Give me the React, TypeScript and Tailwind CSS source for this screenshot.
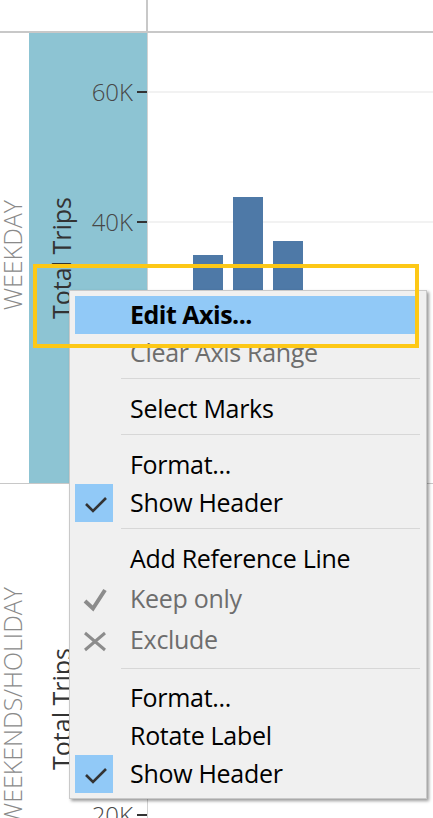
import clsx from "clsx";

type MenuRow =
  | { kind: "item"; label: string; h: string; bold?: boolean; muted?: boolean; active?: boolean; icon?: "check" | "keep" | "x" }
  | { kind: "sep"; pad: string };

const menu: MenuRow[] = [
  { kind: "item", label: "Edit Axis...", h: "h-[38px]", bold: true, active: true },
  { kind: "item", label: "Clear Axis Range", h: "h-[38px]", muted: true },
  { kind: "sep", pad: "pt-[6px]" },
  { kind: "item", label: "Select Marks", h: "h-[38px]" },
  { kind: "sep", pad: "pt-[6px]" },
  { kind: "item", label: "Format...", h: "h-[38px]" },
  { kind: "item", label: "Show Header", h: "h-[38px]", icon: "check" },
  { kind: "sep", pad: "pt-[6px]" },
  { kind: "item", label: "Add Reference Line", h: "h-[39px]" },
  { kind: "item", label: "Keep only", h: "h-[41px]", muted: true, icon: "keep" },
  { kind: "item", label: "Exclude", h: "h-[41px]", muted: true, icon: "x" },
  { kind: "sep", pad: "pt-[7px]" },
  { kind: "item", label: "Format...", h: "h-[38px]" },
  { kind: "item", label: "Rotate Label", h: "h-[38px]" },
  { kind: "item", label: "Show Header", h: "h-[38px]", icon: "check" },
];

function MenuIcon({ icon }: { icon?: "check" | "keep" | "x" }) {
  if (icon === "check") {
    return (
      <div className="flex h-[38px] w-[38px] items-center justify-center bg-[#91c9f7]">
        <svg width="38" height="38" viewBox="0 0 38 38">
          <polyline points="11,20 18,27 31,14" fill="none" stroke="#333" strokeWidth="2.6" />
        </svg>
      </div>
    );
  }
  if (icon === "keep") {
    return (
      <svg width="38" height="41" viewBox="0 0 38 41">
        <polyline points="10,22 18,29.5 30,11" fill="none" stroke="#8c8c8c" strokeWidth="4" />
      </svg>
    );
  }
  if (icon === "x") {
    return (
      <svg width="38" height="41" viewBox="0 0 38 41">
        <path d="M10 13 L30 30 M30 13 L10 30" fill="none" stroke="#8c8c8c" strokeWidth="3" />
      </svg>
    );
  }
  return <div className="h-[38px] w-[38px]" />;
}

function Tick({ top, label }: { top: string; label: string }) {
  return (
    <div className={clsx("absolute right-0 flex -translate-y-1/2 items-center", top)}>
      <span className="text-[24px] font-light leading-none text-[#474747]">{label}</span>
      <span className="ml-[4px] h-[2px] w-[10px] bg-[#333]" />
    </div>
  );
}

function Pane({ row, highlighted }: { row: string; highlighted?: boolean }) {
  return (
    <div className="flex h-[451px] border-b border-[#c8c8c8]">
      <div className="flex w-[29px] items-center justify-center">
        <span className="mb-[6px] mr-[4px] rotate-180 text-[25px] font-light leading-[25px] whitespace-nowrap text-[#8a8a8a] [writing-mode:vertical-rl]">
          {row}
        </span>
      </div>
      <div
        className={clsx(
          "relative flex w-[119px] items-center border-r border-[#d2d2d2]",
          highlighted ? "bg-[#8dc4d3]" : "bg-white"
        )}
      >
        <span className="ml-[20px] rotate-180 text-[25px] leading-[25px] whitespace-nowrap text-[#333] [writing-mode:vertical-rl]">
          Total Trips
        </span>
        {highlighted ? (
          <>
            <Tick top="top-[59px]" label="60K" />
            <Tick top="top-[189px]" label="40K" />
          </>
        ) : (
          <Tick top="top-[331px]" label="20K" />
        )}
      </div>
      <div className="relative flex-1">
        {highlighted && (
          <>
            <div className="absolute left-0 right-0 top-[58px] h-[2px] bg-[#f2f2f2]" />
            <div className="absolute left-0 right-0 top-[188px] h-[2px] bg-[#f2f2f2]" />
            <div className="relative flex h-full items-end gap-[10px] pb-[2px] pl-[45px]">
              <div className="h-[226px] w-[30px] bg-[#4e79a7]" />
              <div className="h-[284px] w-[30px] bg-[#4e79a7]" />
              <div className="h-[240px] w-[30px] bg-[#4e79a7]" />
            </div>
          </>
        )}
      </div>
    </div>
  );
}

export default function App() {
  return (
    <div className="relative h-[818px] w-[433px] overflow-hidden bg-white font-['Open_Sans','Noto_Sans',sans-serif]">
      <div className="flex h-[33px] border-b-2 border-[#c8c8c8]">
        <div className="w-[148px] border-r-2 border-[#c8c8c8]" />
      </div>
      <Pane row="WEEKDAY" highlighted />
      <Pane row="WEEKENDS/HOLIDAY" />

      {/* context menu */}
      <div className="absolute left-[69px] top-[290px] w-[358px] border border-[#c9c9c9] bg-[#f0f0f0] py-[5px] shadow-[2px_2px_3px_rgba(0,0,0,0.4)]">
        {menu.map((m, i) =>
          m.kind === "sep" ? (
            <div key={i} className={clsx("h-[18px]", m.pad)}>
              <div className="ml-[51px] mr-[6px] h-px bg-[#d7d7d7]" />
            </div>
          ) : (
            <div
              key={i}
              className={clsx("ml-[5px] mr-[11px] flex items-center", m.h, m.active && "bg-[#91c9f7]")}
            >
              <MenuIcon icon={m.icon} />
              <span
                className={clsx(
                  "ml-[17px] pb-[2px] text-[25px] leading-none whitespace-nowrap",
                  m.bold ? "tracking-[-0.5px] font-bold" : "tracking-[-0.3px]",
                  m.muted ? "text-[#6d6d6d]" : "text-black"
                )}
              >
                {m.label}
              </span>
            </div>
          )
        )}
      </div>

      {/* callout */}
      <div className="absolute left-[33px] top-[264px] h-[84px] w-[386px] border-4 border-[#fdc816]" />
    </div>
  );
}
